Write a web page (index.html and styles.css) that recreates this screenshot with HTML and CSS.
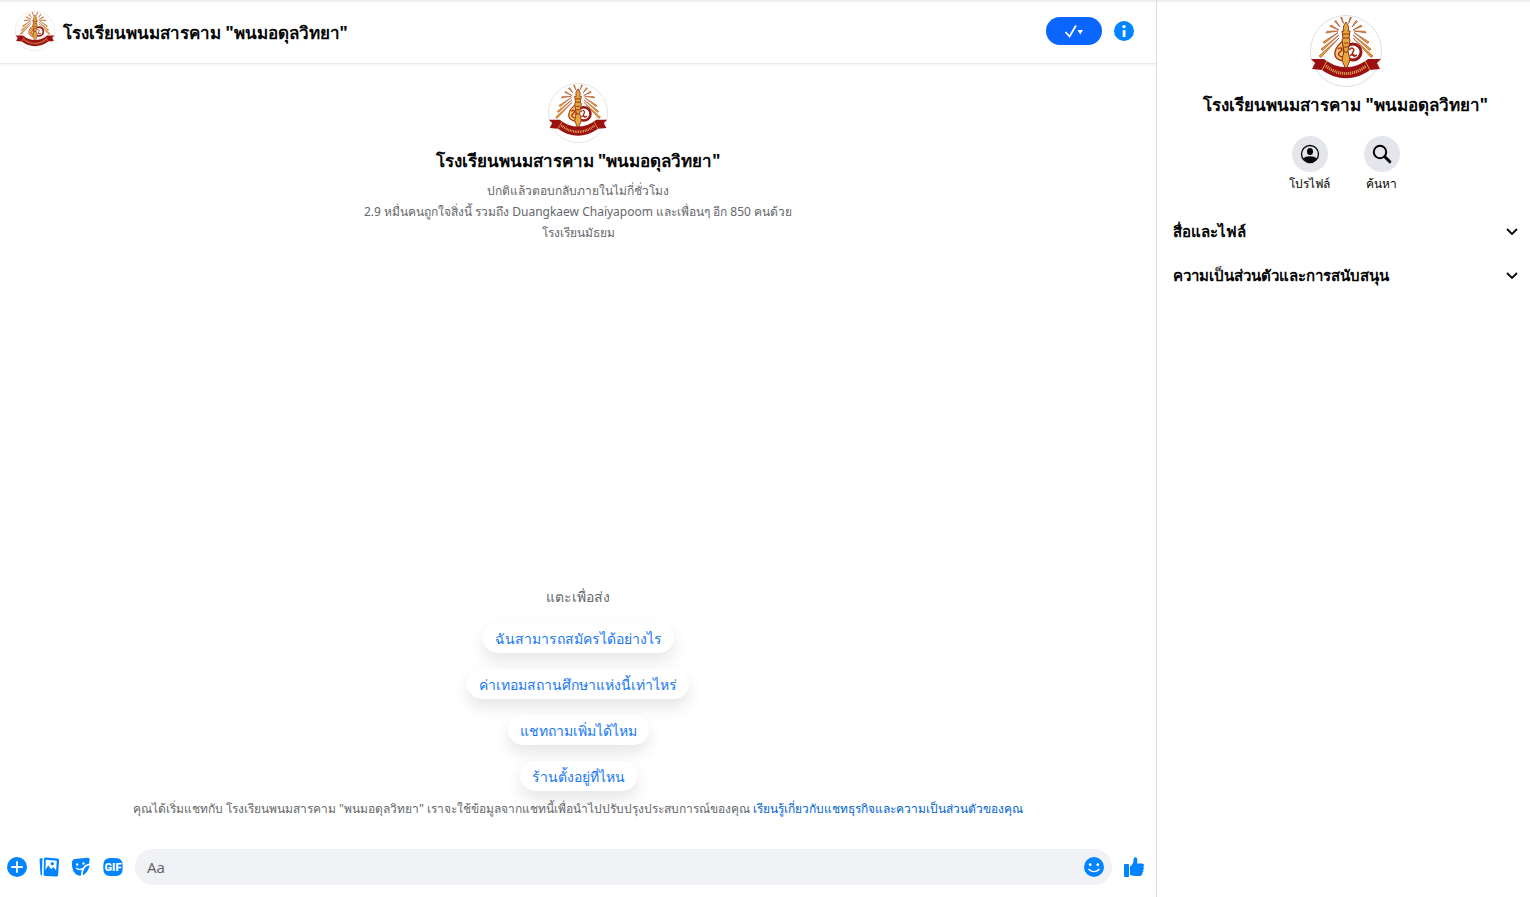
FILE: index.html
```html
<!DOCTYPE html>
<html lang="th">
<head>
  <meta charset="UTF-8" />
  <meta name="viewport" content="width=device-width, initial-scale=1" />
  <title>โรงเรียนพนมสารคาม "พนมอดุลวิทยา"</title>
  <link rel="stylesheet" href="styles.css">
</head>
<body>
  <!-- School emblem, shared by the three avatars -->
  <svg class="sprite" aria-hidden="true">
    <symbol id="emblem" viewBox="0 0 72 72">
      <circle cx="36" cy="36" r="35.5" fill="#fff" stroke="#dedede" />
      <g fill="#e0a030" stroke="#a8401c" stroke-width="0.6">
        <path d="M30.500 2.500l1.500 0 1.500 6zM41.500 2.500l-1.500 0-1.500 6zM24.500 6.500l1.500-1 4 6.500zM47.500 6.500l-1.500-1-4 6.500z" />
        <path d="M20 11.500l1-1.500 8 5zM52 11.500l-1-1.500-8 5zM16 18l1-1.800 11-.2zM56 18l-1-1.800-11-.2z" />
        <path d="M13 27l1.500 1.500L28 17.500zM59 27l-1.500 1.500L44 17.500zM11 34l1.500 1.500L29 20zM61 34l-1.500 1.500L43 20z" />
        <path d="M9 41l2 1.500L29 23zM63 41l-2 1.500L43 23z" />
      </g>
      <circle cx="43" cy="37" r="8" fill="#fff" stroke="#9b1717" stroke-width="3" />
      <path d="M33 26c-4 3-7 6-8 11-1 6 4 9 9 9z" fill="#f3c568" stroke="#a32a16" stroke-width="1.3" />
      <path d="M28 34c4-3 5 1 2 3s-1 5 3 5M39 35c3-4 6-1 4 2s0 5 4 3M40 41c2-3 4-2 5 1" fill="none" stroke="#a32a16" stroke-width="1.4" />
      <path d="M36 7c3 4 3 6 2 9h2l-1 7 1 2-2 11 2 9-4 10-4-10 2-9-2-11 1-2-1-7h2c-1-3-1-5 2-9z" fill="#e5a83e" stroke="#92330f" />
      <path d="M33 19h6M33 23h6M34 28h4M34 32h4M34 37h4" stroke="#92330f" stroke-width="1.2" />
      <path d="M1 44l13 0c14 11 30 11 44 0l13 0-4 4 3 6-10 1c-15 11-33 11-48 0l-10-1 3-6z" fill="#9b1111" />
      <path d="M12 55l5-9M60 55l-5-9" stroke="#e29b3d" />
      <path d="M16 51c12 10 28 10 40 0" fill="none" stroke="#e7ae62" stroke-width="3" stroke-dasharray="1 1" />
    </symbol>
  </svg>

  <div class="app">
    <main class="chat">
      <header class="chat-header">
        <svg class="avatar-small"><use href="#emblem" /></svg>
        <h1 class="chat-name">โรงเรียนพนมสารคาม "พนมอดุลวิทยา"</h1>
        <button class="done-btn" type="button" aria-label="เสร็จ">
          <svg width="20" height="14" viewBox="0 0 20 14">
            <path d="M1.500 8l4 4.500L12 1.500" fill="none" stroke="#fff" stroke-width="1.800" />
            <path d="M13.500 6h5.500l-2.700 4.500z" fill="#fff" />
          </svg>
        </button>
        <button class="icon-btn" type="button" aria-label="ข้อมูล">
          <svg width="20" height="20" viewBox="0 0 20 20">
            <circle cx="10" cy="10" r="10" fill="#0084ff" />
            <circle cx="10" cy="5.600" r="1.700" fill="#fff" />
            <path d="M8.700 9h2.800v7H8.700z" fill="#fff" />
          </svg>
        </button>
      </header>

      <section class="intro">
        <svg class="avatar-medium"><use href="#emblem" /></svg>
        <h2 class="page-name">โรงเรียนพนมสารคาม "พนมอดุลวิทยา"</h2>
        <p>ปกติแล้วตอบกลับภายในไม่กี่ชั่วโมง</p>
        <p>2.9 หมื่นคนถูกใจสิ่งนี้ รวมถึง Duangkaew Chaiyapoom และเพื่อนๆ อีก 850 คนด้วย</p>
        <p>โรงเรียนมัธยม</p>
      </section>

      <section class="prompts">
        <p class="prompts-title">แตะเพื่อส่ง</p>
        <button type="button">ฉันสามารถสมัครได้อย่างไร</button>
        <button type="button">ค่าเทอมสถานศึกษาแห่งนี้เท่าไหร่</button>
        <button type="button">แชทถามเพิ่มได้ไหม</button>
        <button type="button">ร้านตั้งอยู่ที่ไหน</button>
      </section>

      <p class="notice">คุณได้เริ่มแชทกับ โรงเรียนพนมสารคาม "พนมอดุลวิทยา" เราจะใช้ข้อมูลจากแชทนี้เพื่อนำไปปรับปรุงประสบการณ์ของคุณ <a href="#">เรียนรู้เกี่ยวกับแชทธุรกิจและความเป็นส่วนตัวของคุณ</a></p>

      <form class="composer">
        <button class="icon-btn" type="button" aria-label="เพิ่มเติม">
          <svg width="20" height="20" viewBox="0 0 20 20">
            <circle cx="10" cy="10" r="10" fill="#0084ff" />
            <path d="M10 5v10M5 10h10" stroke="#fff" stroke-width="1.800" stroke-linecap="round" />
          </svg>
        </button>
        <button class="icon-btn" type="button" aria-label="รูปภาพ">
          <svg width="20" height="20" viewBox="0 0 20 20">
            <path d="M1.200 1.500l2.300-.5-.6 17.500c-1.200-.1-1.500-.8-1.500-2L.6 3c0-.9 0-1.300.6-1.500z" fill="#0084ff" />
            <path d="M6.800.6l11.500 1c1.200.1 1.900.9 1.800 2.100l-1 14c-.1 1.300-.9 2-2.200 1.900l-10.500-.7c-1.200-.1-1.800-.8-1.800-2L5 2.300C5 1.100 5.700.5 6.800.6z" fill="#0084ff" />
            <path d="M6.800 2.800l11 .9-.7 9.800-2.600-3.500-2.300 2.300-3-3.800-2.800 4.500z" fill="#fff" />
            <circle cx="13.300" cy="6.700" r="1.600" fill="#0084ff" />
          </svg>
        </button>
        <button class="icon-btn" type="button" aria-label="สติกเกอร์">
          <svg width="20" height="20" viewBox="0 0 20 20">
            <path d="M4 2l12-1.300c1.800-.2 2.800.6 2.600 2.300L18 6.800c-4.800.7-7.800 4.500-8 11.800-2.300.2-4.300-.3-5.800-2C1.500 13.600.7 9 1 5.200 1.200 3.200 2.200 2.200 4 2z" fill="#0084ff" />
            <path d="M11.700 18.300c.2-5.700 2.600-9.200 6.600-10 .5 3-3 8.500-6.600 10z" fill="#0084ff" />
            <circle cx="6.200" cy="7.500" r="1.200" fill="#fff" />
            <circle cx="12.500" cy="6.500" r="1.200" fill="#fff" />
            <path d="M5.500 11.300c2 1.500 4.200 1.500 6.300.3" fill="none" stroke="#fff" stroke-width="1.400" stroke-linecap="round" />
          </svg>
        </button>
        <button class="icon-btn" type="button" aria-label="GIF">
          <svg width="20" height="20" viewBox="0 0 20 20">
            <path d="M10 1c7.500 0 9.700 1.500 9.700 9s-2.200 9-9.700 9S.3 17.500.3 10 2.500 1 10 1z" fill="#0084ff" />
            <text class="gif-label" x="10" y="14" text-anchor="middle">GIF</text>
          </svg>
        </button>
        <div class="message-box">
          <input type="text" placeholder="Aa" aria-label="ข้อความ" />
          <button class="icon-btn" type="button" aria-label="อีโมจิ">
            <svg width="20" height="20" viewBox="0 0 20 20">
              <circle cx="10" cy="10" r="10" fill="#0084ff" />
              <circle cx="6.200" cy="7.700" r="1.400" fill="#fff" />
              <circle cx="13.800" cy="7.700" r="1.400" fill="#fff" />
              <path d="M5 12.500c3 2.700 7 2.700 10 0" fill="none" stroke="#fff" stroke-width="1.600" stroke-linecap="round" />
            </svg>
          </button>
        </div>
        <button class="icon-btn" type="button" aria-label="ถูกใจ">
          <svg width="20" height="20" viewBox="0 0 20 20">
            <rect x="0" y="7" width="5" height="13" rx="1" fill="#0084ff" />
            <path d="M6 9.500c2.300-1.700 3.500-3.700 3.500-6 0-2 .3-3.300 1.600-3.300 2.200 0 2.800 2.700 1.900 6.300h5c1.300 0 2 .8 2 1.800 0 .8-.4 1.300-.8 1.600.6.400.8 1 .7 1.700-.1.700-.5 1.100-.9 1.400.4.500.5 1 .3 1.700-.2.600-.6.900-1.100 1.100.3 1.600-.5 3.200-2.400 3.200H11c-2.300 0-3.700-.5-5-1.200z" fill="#0084ff" />
          </svg>
        </button>
      </form>
    </main>

    <aside class="details">
      <div class="profile">
        <svg class="avatar-large"><use href="#emblem" /></svg>
        <h2 class="page-name">โรงเรียนพนมสารคาม "พนมอดุลวิทยา"</h2>
        <div class="actions">
          <button class="action" type="button">
            <span class="action-icon">
              <svg width="20" height="20" viewBox="0 0 20 20">
                <circle cx="10" cy="10" r="8.500" fill="none" stroke="#050505" stroke-width="1.300" />
                <ellipse cx="10" cy="7.500" rx="3" ry="3.500" fill="#050505" />
                <path d="M3.500 14.500c2-3 11-3 13 0-1.500 2.500-4 4-6.500 4s-5-1.500-6.500-4z" fill="#050505" />
              </svg>
            </span>
            โปรไฟล์
          </button>
          <button class="action" type="button">
            <span class="action-icon">
              <svg width="20" height="20" viewBox="0 0 20 20">
                <circle cx="8" cy="8" r="6.200" fill="none" stroke="#050505" stroke-width="2" />
                <path d="M12.800 12.800l5 5" stroke="#050505" stroke-width="3" stroke-linecap="round" />
              </svg>
            </span>
            ค้นหา
          </button>
        </div>
      </div>
      <button class="section-btn" type="button">
        สื่อและไฟล์
        <svg width="12" height="8" viewBox="0 0 12 8"><path d="M1.500 1.500L6 6l4.500-4.500" fill="none" stroke="#050505" stroke-width="1.800" stroke-linecap="round" /></svg>
      </button>
      <button class="section-btn" type="button">
        ความเป็นส่วนตัวและการสนับสนุน
        <svg width="12" height="8" viewBox="0 0 12 8"><path d="M1.500 1.500L6 6l4.500-4.500" fill="none" stroke="#050505" stroke-width="1.800" stroke-linecap="round" /></svg>
      </button>
    </aside>
  </div>
</body>
</html>
```
FILE: styles.css
```css
* {
  box-sizing: border-box;
}
body {
  margin: 0;
  background: #fff;
  color: #050505;
  font-family: "Noto Sans", "Open Sans", sans-serif;
  font-size: 12px;
}
h1, h2, p {
  margin: 0;
}
button, input {
  font-family: inherit;
  color: inherit;
  border: none;
  background: none;
  padding: 0;
}
button {
  cursor: pointer;
}
svg {
  display: block;
  flex-shrink: 0;
}
.sprite {
  position: absolute;
  width: 0;
  height: 0;
}

.app {
  display: flex;
  min-height: 100vh;
  box-shadow: inset 0 4px 3px -3px rgba(0, 0, 0, 0.12);
}

/* chat column */
.chat {
  flex: 1;
  min-width: 0;
  display: flex;
  flex-direction: column;
}
.chat-header {
  display: flex;
  align-items: center;
  height: 64px;
  padding: 0 22px 2px 15px;
  border-bottom: 1px solid #e9e9e9;
  box-shadow: 0 1px 2px rgba(0, 0, 0, 0.06);
}
.avatar-small {
  width: 40px;
  height: 40px;
}
.chat-name {
  margin-left: 8px;
  margin-right: auto;
  padding-top: 4px;
  font-size: 17px;
  line-height: 24px;
}
.done-btn {
  display: flex;
  align-items: center;
  justify-content: center;
  width: 56px;
  height: 28px;
  margin-right: 12px;
  border-radius: 14px;
  background: #0a66ff;
}
.page-name {
  font-size: 17px;
  line-height: 24px;
  text-align: center;
}

.intro {
  display: flex;
  flex-direction: column;
  align-items: center;
  padding: 19px 16px;
  color: #65676b;
  line-height: 21px;
  text-align: center;
}
.avatar-medium {
  width: 60px;
  height: 60px;
}
.intro .page-name {
  margin: 6px 0 7px;
  color: #050505;
}

.prompts {
  display: flex;
  flex-direction: column;
  align-items: center;
  gap: 16px;
  margin-top: auto;
}
.prompts-title {
  color: #65676b;
  font-size: 14px;
  line-height: 20px;
}
.prompts button {
  height: 30px;
  padding: 2px 12px 0;
  border-radius: 15px;
  background: #fff;
  box-shadow: 0 8px 16px rgba(0, 0, 0, 0.1);
  color: #1877f2;
  font-size: 14px;
}

.notice {
  padding: 8px 16px;
  color: #65676b;
  line-height: 20px;
  text-align: center;
}
.notice a {
  color: #0064d1;
  text-decoration: none;
}

.composer {
  display: flex;
  align-items: center;
  gap: 12px;
  padding: 22px 12px 12px 7px;
}
.message-box {
  flex: 1;
  display: flex;
  align-items: center;
  height: 36px;
  padding: 0 8px 0 12px;
  border-radius: 18px;
  background: #f0f2f5;
}
.message-box input {
  flex: 1;
  min-width: 0;
  font-size: 15px;
  outline: none;
}
.message-box input::placeholder {
  color: #65676b;
}
.gif-label {
  fill: #fff;
  font-family: Roboto, sans-serif;
  font-size: 11px;
  font-weight: 900;
}

/* details column */
.details {
  flex: 0 0 374px;
  border-left: 1px solid #dcdcdc;
}
.profile {
  display: flex;
  flex-direction: column;
  align-items: center;
  padding: 15px 0 14px 4px;
}
.avatar-large {
  width: 72px;
  height: 72px;
}
.profile .page-name {
  margin-top: 6px;
}
.actions {
  display: flex;
  gap: 16px;
  margin-top: 19px;
}
.action {
  display: flex;
  flex-direction: column;
  align-items: center;
  width: 56px;
  font-size: 12px;
  line-height: 24px;
}
.action-icon {
  display: flex;
  align-items: center;
  justify-content: center;
  width: 36px;
  height: 36px;
  border-radius: 50%;
  background: #e4e6eb;
}
.section-btn {
  display: flex;
  align-items: center;
  justify-content: space-between;
  width: 100%;
  height: 44px;
  padding: 0 12px 0 16px;
  font-size: 15px;
  font-weight: 600;
}
```
